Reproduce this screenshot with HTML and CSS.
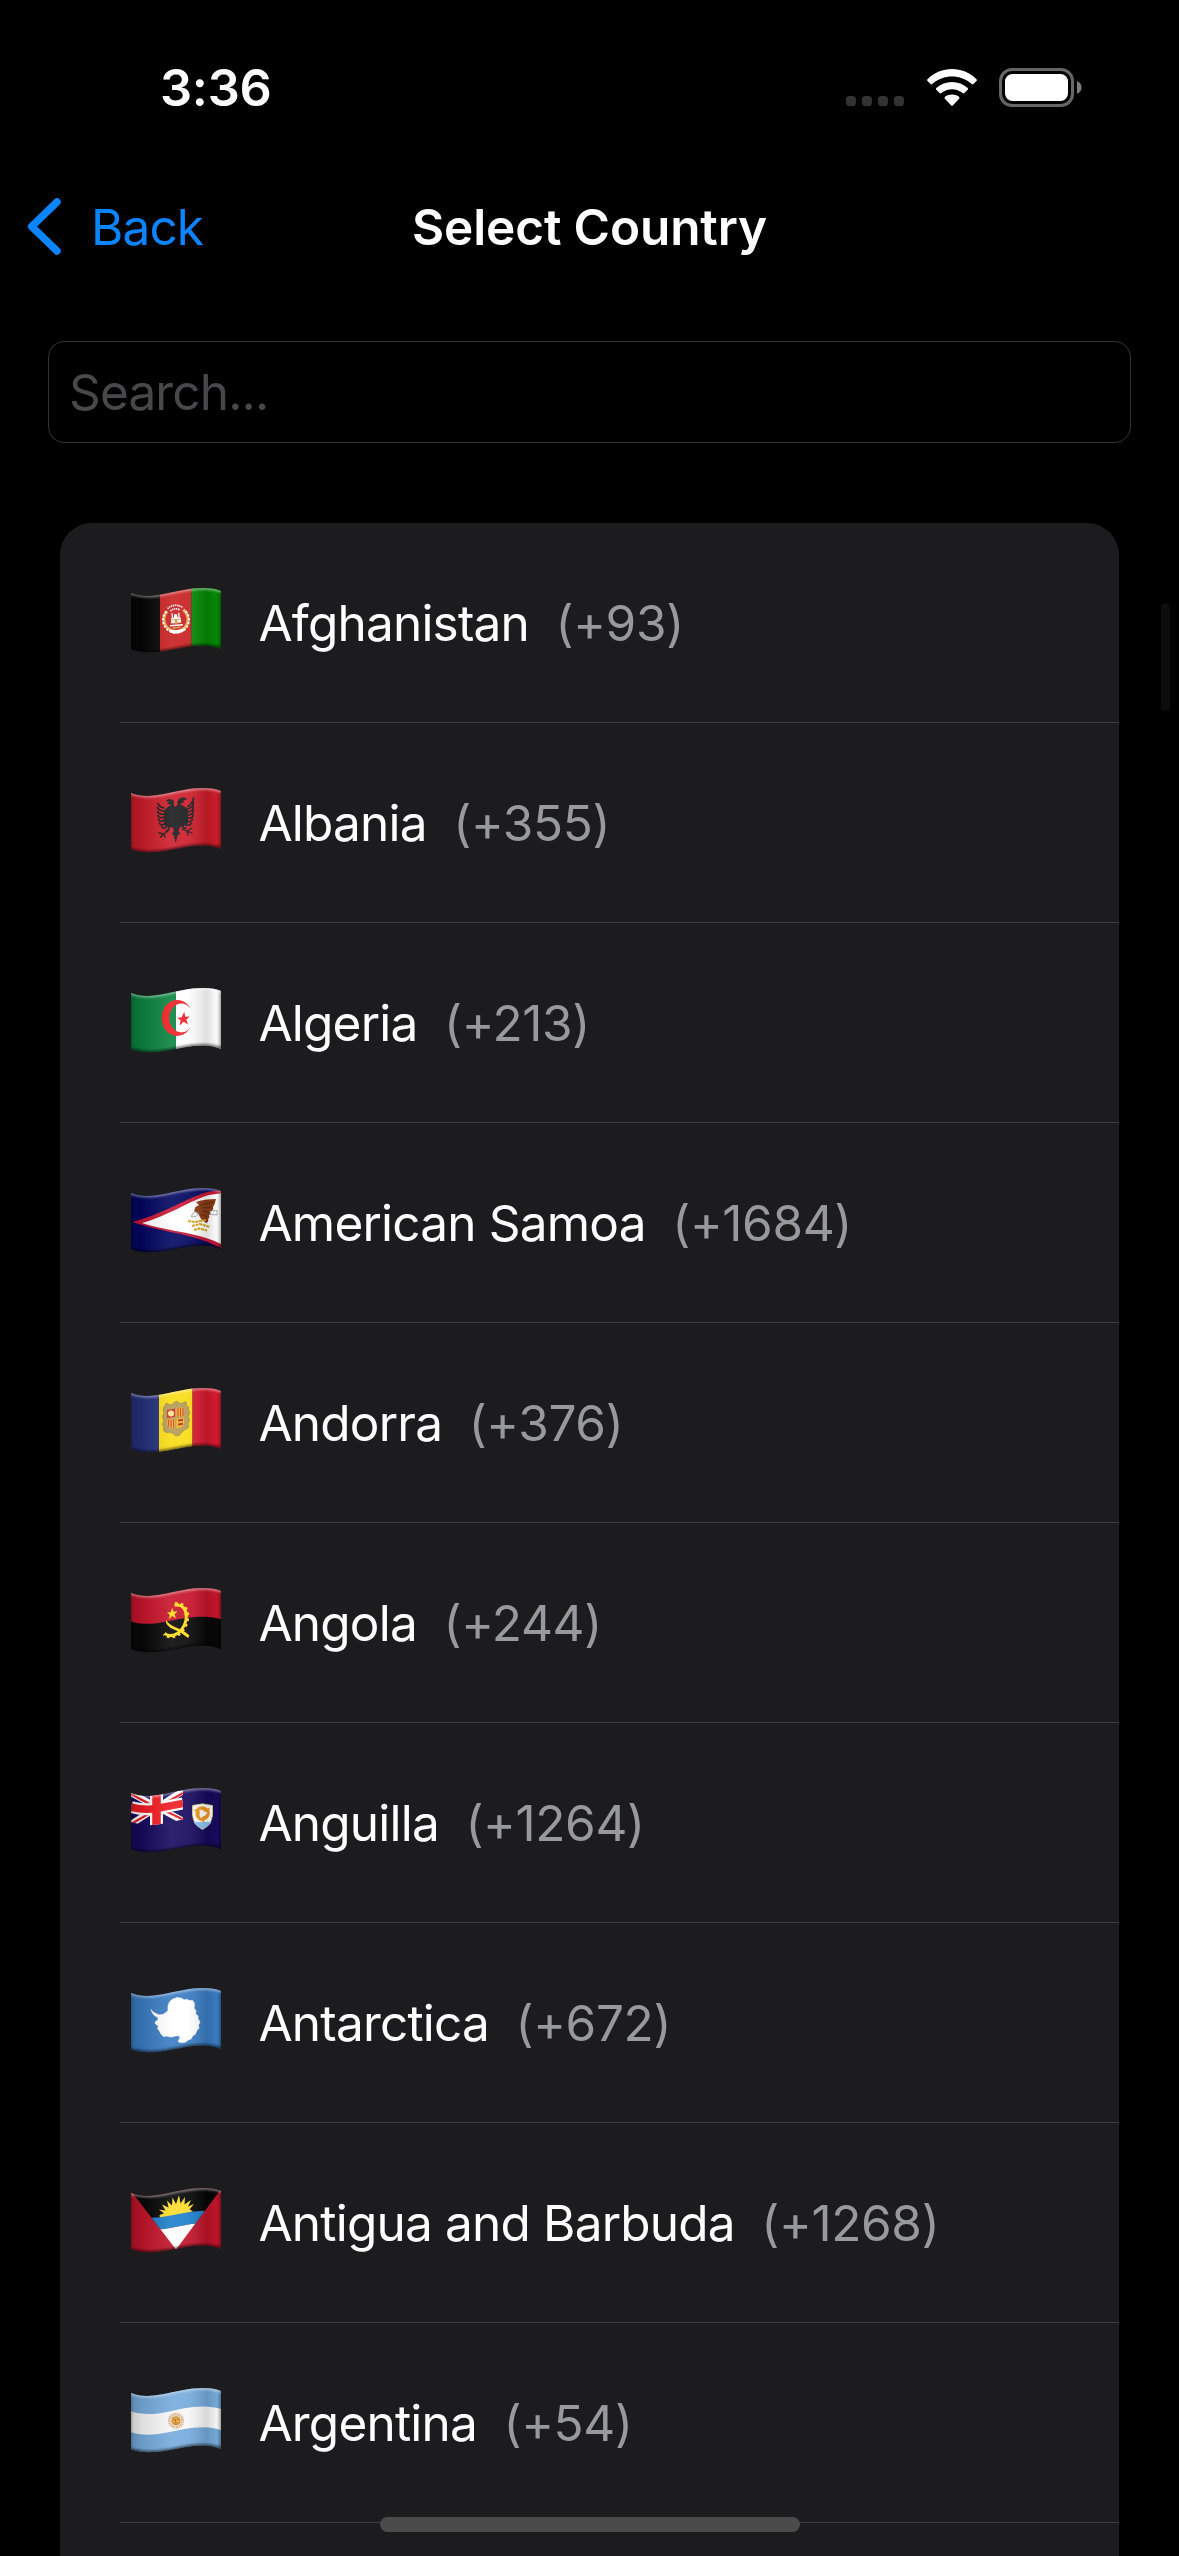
FILE: index.html
```html
<!DOCTYPE html>
<html lang="en">
<head>
<meta charset="utf-8">
<title>Select Country</title>
<link rel="stylesheet" href="styles.css">
</head>
<body>
<svg class="defs" aria-hidden="true">
  <defs>
    <path id="wave" d="M0 5C8 8.5 18 8.8 30 6.6C45 3.6 58 0 72 0C80 0 86 1.2 90 3V61C84 58.5 78 57.5 72 57.5C58 57.5 46 61 33 63C20 65 8 64.5 0 61.3Z"/>
    <clipPath id="cloth"><use href="#wave"/></clipPath>
    <linearGradient id="fold">
      <stop offset="0" stop-color="#000" stop-opacity=".2"/>
      <stop offset=".12" stop-color="#000" stop-opacity=".1"/>
      <stop offset=".45" stop-color="#fff" stop-opacity=".1"/>
      <stop offset=".62" stop-color="#fff" stop-opacity=".08"/>
      <stop offset=".84" stop-color="#000" stop-opacity=".13"/>
      <stop offset=".95" stop-color="#000" stop-opacity=".02"/>
      <stop offset="1" stop-color="#000" stop-opacity=".2"/>
    </linearGradient>
    <filter id="soft" x="-10%" y="-40%" width="120%" height="180%"><feGaussianBlur stdDeviation="1.1"/></filter>
    <g id="shade">
      <use href="#wave" fill="url(#fold)"/>
      <g fill="none" filter="url(#soft)">
        <path d="M-2 4C8 8.5 18 8.8 30 6.6C45 3.6 58 0 72 0C80 0 86 1.2 92 3" stroke="#fff" stroke-opacity=".42" stroke-width="3.4"/>
        <path d="M92 61C84 58.5 78 57.5 72 57.5C58 57.5 46 61 33 63C20 65 8 64.5 -2 61.3" stroke="#000" stroke-opacity=".5" stroke-width="3.6"/>
        <path d="M0 5V61M90 3V61" stroke="#000" stroke-opacity=".25" stroke-width="2"/>
      </g>
    </g>
  </defs>
</svg>

<div class="screen">
  <header class="status">
    <time class="clock">3:36</time>
    <div class="indicators">
      <svg class="signal" viewBox="0 0 58 10" fill="#333"><rect width="10" height="10" rx="3.6"/><rect x="16" width="10" height="10" rx="3.6"/><rect x="32" width="10" height="10" rx="3.6"/><rect x="48" width="10" height="10" rx="3.6"/></svg>
      <svg class="wifi" viewBox="0 0 50 38" fill="#fff">
        <path d="M.5 10.2C14 -3.4 36 -3.4 49.5 10.2Q50.3 11 49.5 11.9L46.4 15.1Q45.6 15.9 44.8 15.1C33.5 4.9 16.5 4.9 5.2 15.1Q4.4 15.9 3.6 15.1L.5 11.9Q-.3 11 .5 10.2Z"/>
        <path d="M9.3 19C18 10.9 32 10.9 40.7 19Q41.6 19.9 40.7 20.8L37.4 24.1Q36.6 24.9 35.7 24.1C29.5 18.9 20.5 18.9 14.3 24.1Q13.4 24.9 12.6 24.1L9.3 20.8Q8.4 19.9 9.3 19Z"/>
        <path d="M18 27.8C22 24.6 28 24.6 32 27.8Q33 28.7 32.1 29.7L25.8 36.4Q25 37.2 24.2 36.4L17.9 29.7Q17 28.7 18 27.8Z"/>
      </svg>
      <svg class="battery" viewBox="0 0 83 39"><rect x="1.5" y="1.5" width="72" height="36" rx="11.5" fill="none" stroke="#666" stroke-width="3"/><rect x="6" y="6" width="63" height="27" rx="7.5" fill="#fff"/><path d="M78 13Q82.500 15 82.500 19.400Q82.500 23.800 78 25.800Z" fill="#7d7d7d"/></svg>
    </div>
  </header>

  <nav class="nav">
    <a class="back"><svg class="chevron" viewBox="0 0 34 58"><path d="M30 4L4.700 28.500L30 53" fill="none" stroke="#0a84ff" stroke-width="7.400" stroke-linecap="round" stroke-linejoin="round"/></svg><span>Back</span></a>
    <h1 class="title">Select Country</h1>
  </nav>

  <div class="search"><span>Search...</span></div>

  <ul class="list">
    <li class="row">
      <svg class="flag" viewBox="0 0 90 65"><g clip-path="url(#cloth)">
        <path fill="#050505" d="M0 0H29V65H0z"/><path fill="#c8201f" d="M29 0H60.500V65H29z"/><path fill="#058a05" d="M60.500 0H90V65H60.500z"/>
        <g transform="rotate(-5 45 32)"><path fill="none" stroke="#e2a85c" stroke-width="3" d="M37 22.500A12 12 0 1 0 53 22.500"/><path fill="none" stroke="#fff" stroke-width="1.800" stroke-dasharray="2.200 1.600" d="M36 22.500A13 13 0 1 0 54 22.500"/>
        <path fill="none" stroke="#fff" stroke-width="1.600" stroke-dasharray="1.400 .7" d="M37.500 20Q45 14.500 52.500 20M40 22.500Q45 19 50 22.500"/>
        <path fill="#fff" d="M40 35V30h1v-5h1.300v4.500h1V27q1.700-2 3.400 0v2.500h1V25H49v5h1v5zM38.500 36.500h13v1.500h-13zM38 44q7 3 14 0v-3q-7 2.500-14 0z"/><path fill="#d79b4b" d="M43.500 36v-3q1.500-2.500 3 0v3zM40 31h10v1H40zM41 39h8v1.500h-8z"/></g>
      </g><use href="#shade" clip-path="url(#cloth)"/></svg>
      <p class="label"><span class="name">Afghanistan</span><span class="code">(+93)</span></p>
    </li>
    <li class="row">
      <svg class="flag" viewBox="0 0 90 65"><g clip-path="url(#cloth)">
        <path fill="#cd1d2a" d="M0 0H90V65H0z"/>
        <path fill="#1b1b1d" d="M44.500 19Q42 17 43 15Q43.500 12 40 11.200Q37 10.500 34.500 13.500L38 13.500L36 16Q40 15.500 39.500 17.500Q36 18.500 33 23V37L38 40L41.500 39L43 43L40.500 46L42.500 47L44.700 55L47 46.500L49.500 46L47.500 43L49 38.500L52 39L57 35V21.500Q52 16.500 49.500 17Q49.500 14 53.500 14.500L52 12.500L56.500 11Q51 8 47.500 11.500Q46 13 46.500 15Q47 17.500 44.500 19Z"/>
        <g fill="none" stroke="#1b1b1d" stroke-width="1.700" stroke-linecap="round"><path d="M33 20Q28 19 27 15.500M33 23Q28 23 26.500 19.500M33 26Q28 27 26.500 23.500M33 29Q28 31 27 27.500M33 32Q29 35 27.500 31.500M34 35Q31 39 28.500 35.500M36 38Q33 42 31 39M38 40Q37 43 35 43M57 18.500Q62 15 62.500 10M57 21Q62 19 62.500 14.500M57 24Q62 23 62.500 18.500M57 27Q62 27 62.500 22.500M57 30Q62 31 62 27M56 33Q60 35 61.500 31.500M54 36Q58 39 60 35.500M51 38Q53 41 55 40"/><path stroke-width="1.300" d="M38 42L33 46L28 45M33 46L29.500 49M33 46L34 49M51 41L56 43L61 40M56 43L61 45M56 43L57 47"/></g>
      </g><use href="#shade" clip-path="url(#cloth)"/></svg>
      <p class="label"><span class="name">Albania</span><span class="code">(+355)</span></p>
    </li>
    <li class="row">
      <svg class="flag" viewBox="0 0 90 65"><g clip-path="url(#cloth)">
        <path fill="#0b8440" d="M0 0H45V65H0z"/><path fill="#fff" d="M45 0H90V65H45z"/>
        <path fill="#f21d25" d="M59.700 21A15.500 18 0 1 0 59.700 38.800A12 14.500 0 1 1 59.700 21Z"/>
        <path fill="#f21d25" d="M53.200 23.700L54.200 28.800L58.800 28.400L55.300 31.600L57 36.400L52.600 33.700L48.700 37.600L49.600 32.300L46 29.900L50.700 29.300Z"/>
      </g><use href="#shade" clip-path="url(#cloth)"/></svg>
      <p class="label"><span class="name">Algeria</span><span class="code">(+213)</span></p>
    </li>
    <li class="row">
      <svg class="flag" viewBox="0 0 90 65"><g clip-path="url(#cloth)">
        <path fill="#02065f" d="M0 0H90V65H0z"/>
        <path fill="#c71733" d="M1 34C30 27 60 8 76 4L92 2V62C76 51 50 46 35 43Q15 38.500 1 34Z"/><path fill="#fff" d="M11 35C35 29 60 12 78 7L92 5V57C76 48 50 44 35 41Q20 38 11 35Z"/>
        <path fill="#8b3d16" d="M65 14Q73 11 85 11Q84 16 82 19Q83 22 79 24Q81 26 78 27Q79 30 77 31Q78 34 75 35L70 31L67 25L63 23L64.500 19L68 17Z"/><path fill="none" stroke="#552307" stroke-width=".7" d="M69 17Q76 16 83 14M70 20Q75 20 81 19M71 23L78 24M69 26L76 29"/>
        <path fill="#fff" stroke="#777" stroke-width=".6" d="M64 24Q60 26 60.500 29L65 28.500L67.500 26ZM79 23L86 22.500L86 27L79.500 26.500Z"/>
        <path fill="none" stroke="#d9a818" stroke-width="2" stroke-dasharray="3 .7" d="M57 33L64 34L75 32M61 38L69 36L79 39M63 42L68 40.500L76 42.500"/>
      </g><use href="#shade" clip-path="url(#cloth)"/></svg>
      <p class="label"><span class="name">American Samoa</span><span class="code">(+1684)</span></p>
    </li>
    <li class="row">
      <svg class="flag" viewBox="0 0 90 65"><g clip-path="url(#cloth)">
        <path fill="#25307c" d="M0 0H28V65H0z"/><path fill="#fadc14" d="M28 0H61.500V65H28z"/><path fill="#d81930" d="M61.500 0H90V65H61.500z"/>
        <g transform="translate(0 -.5)"><path fill="#b49c56" stroke="#98834a" stroke-width=".7" d="M34 18Q35 14 38 17Q41 18 42 16Q46 12 48 15.500Q51 17 54 14Q57 15 55 18Q59 19 57.500 22Q60 26 57 29Q60 33 57 36Q59 41 54 42Q51 44 50 46Q46 51 42 46Q38 44 35 45Q31 43 33 40Q30 37 33 33Q30 29 33 26Q31 21 34 18Z"/>
        <path fill="#d5262c" d="M36 22.500L44 21V29.500L36 30.500z"/><circle cx="40" cy="26" r="3" fill="#ffe58a"/><path fill="#f1b52b" d="M45.500 21L53 19.500V28.500L45.500 29.500zM36 32L44 31V41Q38 41 36 38zM45.500 31L53 30V37Q51 40 45.500 41z"/><path stroke="#d44526" stroke-width="1.300" d="M47 21V29M49.500 20.500V29M52 20V28.500M37.500 32V39M40 32V40M42.500 31.500V41"/><path stroke="#b92c24" stroke-width="2" d="M47 33L52 32.300M47 37L52 36.300"/></g>
      </g><use href="#shade" clip-path="url(#cloth)"/></svg>
      <p class="label"><span class="name">Andorra</span><span class="code">(+376)</span></p>
    </li>
    <li class="row">
      <svg class="flag" viewBox="0 0 90 65"><g clip-path="url(#cloth)">
        <path fill="#c7142b" d="M0 0H90V50H0z"/><path fill="#070707" d="M0 33.500C8 36.500 20 36.500 32 34.300C46 31.500 58 28.800 72 28.800Q83 29 90 31.500V65H0z"/>
        <path fill="none" stroke="#fddb1e" stroke-width="3" d="M43.500 17.300C52 16 55.500 22 55.300 29C55 36 52 41 47 45C43 48 38 48.500 33.500 45.500"/><path fill="none" stroke="#fddb1e" stroke-width="2.400" stroke-dasharray="2.600 3.200" d="M44 15.500C53 14 57.500 21 57 29.500C56.500 37 53 42.500 48 46.500C43 50 37 50 32.500 46.500"/>
        <path fill="#fddb1e" d="M35 31.500Q37 36 45 39.500Q54 43 58.500 47.500L57 50Q51 44.500 43 41.500Q34 38 35 31.500Z"/>
        <path fill="#fddb1e" d="M41.300 19.800L42.600 23.700L46.500 23.300L43.600 26.200L45 30.200L41.300 28L37.800 31.200L38.700 26.800L35.800 24.600L39.600 24.200Z"/>
      </g><use href="#shade" clip-path="url(#cloth)"/></svg>
      <p class="label"><span class="name">Angola</span><span class="code">(+244)</span></p>
    </li>
    <li class="row">
      <svg class="flag" viewBox="0 0 90 65"><g clip-path="url(#cloth)">
        <path fill="#170a5e" d="M0 0H90V65H0z"/>
        <clipPath id="canton"><path d="M0 4Q14 10 28 6.800L52 2V31.500L30 36Q14 39 0 34z"/></clipPath>
        <g clip-path="url(#canton)"><path fill="none" stroke="#fff" stroke-width="6.500" d="M0 5L52 33M0 36L52 3"/><path fill="none" stroke="#ee1c25" stroke-width="2.300" d="M0 6L26 20M0 36L26 21M26 19L52 31.500M26 20L52 5"/>
        <path fill="none" stroke="#fff" stroke-width="12" d="M0 19Q14 23 28 20L52 15.500"/><path stroke="#fff" stroke-width="13" d="M25.500 0V40"/><path fill="none" stroke="#f31b22" stroke-width="7.500" d="M0 19Q14 23 28 20L52 15.500"/><path stroke="#f31b22" stroke-width="8.500" d="M25.500 0V40"/></g>
        <path fill="#fff" stroke="#d7d66b" stroke-width=".8" d="M61.500 17.500L71.500 15.800L81.500 17.500V27Q80.500 37 71.500 41.500Q62.500 37 61.500 27Z"/><path fill="#8dc6f4" d="M62.500 34H80.500Q77.500 39 71.500 41Q65.500 39 62.500 34Z"/>
        <g fill="#f39a20"><path id="dolphin" d="M66 20Q72 16.500 76.500 20.500L79 19.500L77.500 25L73.500 23.500Q71 20.500 66.500 22.500Z"/><use href="#dolphin" transform="rotate(120 71.500 25.500)"/><use href="#dolphin" transform="rotate(240 71.500 25.500)"/></g>
      </g><use href="#shade" clip-path="url(#cloth)"/></svg>
      <p class="label"><span class="name">Anguilla</span><span class="code">(+1264)</span></p>
    </li>
    <li class="row">
      <svg class="flag" viewBox="0 0 90 65"><g clip-path="url(#cloth)">
        <path fill="#3a7cc3" d="M0 0H90V65H0z"/>
        <path fill="#fff" stroke="#fff" stroke-width=".7" stroke-linejoin="round" d="M20 21.500L22 24L25 25.500L28 27L32 26.500L35 24.500L37 22.500L37 18L38.500 14L41 11.500L44 10.500L46 9.500L49 10L51 10.500L53 12L56 11.300L58 12.500L62 12.800L63.500 16L63 20L65 23L64.500 26L67 28L67 31L69 34L67.500 37L68 40L65.500 43L64.500 46L61.500 48L60 51L57 52L54.500 54L51 54.500L47.500 54L47.500 52L49 50.500L48 47.500L44 48L40 49L36 48L32.500 48.500L30 46L28.500 43L26.500 40.500L27.500 38L24.500 36L24 34L27 32L27 29.500L23.500 27.500L21.500 25Z"/>
      </g><use href="#shade" clip-path="url(#cloth)"/></svg>
      <p class="label"><span class="name">Antarctica</span><span class="code">(+672)</span></p>
    </li>
    <li class="row">
      <svg class="flag" viewBox="0 0 90 65"><g clip-path="url(#cloth)">
        <path fill="#c1142b" d="M0 0H90V65H0z"/>
        <clipPath id="vee"><path d="M0 3L45 61.500L91 0H0z"/></clipPath>
        <g clip-path="url(#vee)"><path fill="#050505" d="M0 0H90V40H0z"/>
        <path fill="#fddb2b" d="M28.500 27L33 25.200L27.800 21.500L34.500 22.500L31 16.500L37.500 19.500L36 12.500L41 17.500L41.500 9.500L45 16L48 7L49.500 15.500L54 9L53.500 16.500L60 12L57 18.500L63 16L58.500 21.500L62 23L46 30L29 30Z"/>
        <path fill="#1d7fca" d="M14 30Q28 30 45 26.500Q60 23 78 22.500V34Q62 35 46 38.700Q34 41.700 20 42Z"/><path fill="#fff" d="M20 42Q34 41.700 46 38.700Q60 35.500 76 34.500V65H20z"/></g>
      </g><use href="#shade" clip-path="url(#cloth)"/></svg>
      <p class="label"><span class="name">Antigua and Barbuda</span><span class="code">(+1268)</span></p>
    </li>
    <li class="row">
      <svg class="flag" viewBox="0 0 90 65"><g clip-path="url(#cloth)">
        <path fill="#76abdc" d="M0 0H90V65H0z"/>
        <path fill="#f7f7f7" d="M0 23.300C8 26.300 20 27 32 24.800C46 22 58 18.500 72 18.500Q83 18.800 90 21V42.300Q83 39.300 72 39.300C58 39.300 46 42.800 32 45.300C20 47.500 8 47 0 44.300Z"/>
        <circle cx="45" cy="32.700" r="6.800" fill="#f1d9ba"/><circle cx="45" cy="32.700" r="6.800" fill="none" stroke="#c99862" stroke-width="2.800" stroke-dasharray=".75 .9"/><circle cx="45" cy="32.700" r="4" fill="#f2a52c" stroke="#9e681f" stroke-width=".8"/><path fill="none" stroke="#89551a" stroke-width=".8" d="M42.500 31.500H44.500V34M47.500 31.500H45.500M43.500 35H46.500"/>
      </g><use href="#shade" clip-path="url(#cloth)"/></svg>
      <p class="label"><span class="name">Argentina</span><span class="code">(+54)</span></p>
    </li>
    <li class="row"></li>
  </ul>
  <div class="scrollbar"></div>
  <div class="home"></div>
</div>
</body>
</html>
```

FILE: styles.css
```css
* { box-sizing: border-box; }
body { margin: 0; background: #000; }
.defs { position: absolute; width: 0; height: 0; }
.screen {
  position: relative;
  width: 1179px;
  height: 2556px;
  overflow: hidden;
  background: #000;
  color: #fff;
  font-family: Inter, "Liberation Sans", sans-serif;
  font-size: 49.5px;
  line-height: 60px;
  font-feature-settings: "calt" 0;
}
.screen svg { display: block; flex: none; }

.status {
  display: flex;
  justify-content: space-between;
  height: 167px;
  padding: 58px 97px 0 160px;
}
.clock { font-size: 50.5px; font-weight: 600; letter-spacing: -.3px; }
.indicators { display: flex; align-items: flex-start; padding-top: 10px; }
.signal { width: 58px; height: 10px; margin: 28px 22.5px 0 0; }
.wifi { width: 50px; height: 38px; margin: 1px 22.5px 0 0; }
.battery { width: 83px; height: 39px; }

.nav {
  display: grid;
  grid-template-columns: 1fr auto 1fr;
  align-items: center;
  height: 120px;
  padding: 0 27px;
}
.back { display: flex; align-items: center; gap: 30px; color: #0a84ff; letter-spacing: -.9px; }
.chevron { width: 34px; height: 58px; }
.title { grid-column: 2; margin: 0; font-size: 49.5px; font-weight: 600; letter-spacing: -.12px; }

.search {
  display: flex;
  align-items: center;
  width: 1083px;
  height: 102px;
  margin: 54px 0 0 48px;
  padding-left: 20px;
  border: 1px solid #333;
  border-radius: 16px;
  color: #48484a;
  letter-spacing: -.85px;
}

.list {
  width: 1059px;
  margin: 80px 0 0 60px;
  padding: 0;
  list-style: none;
  background: #1c1c1e;
  border-radius: 32px 32px 0 0;
}
.row { display: flex; align-items: flex-start; height: 200px; margin-left: 60px; padding: 65px 0 0 11px; border-bottom: 1px solid #3d3d41; }
.flag { width: 90px; height: 65px; }
.label { display: flex; gap: 26.5px; margin: 5px 0 0 37.5px; white-space: nowrap; }
.name { letter-spacing: -.8px; }
.code { color: #98989f; letter-spacing: -.35px; }

.scrollbar { position: absolute; top: 603px; left: 1161px; width: 9px; height: 108px; border-radius: 5px; background: #0d0d0d; }
.home { position: absolute; top: 2517px; left: 380px; width: 420px; height: 15px; border-radius: 8px; background: #4b4b4b; }
```
